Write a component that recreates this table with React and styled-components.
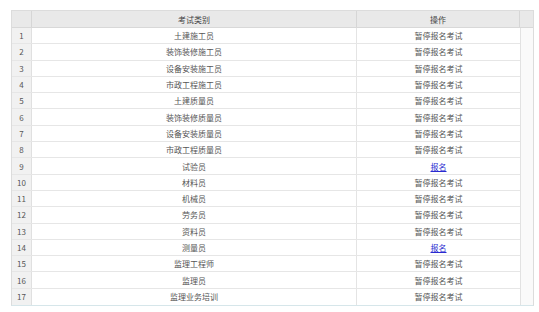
import styled, { createGlobalStyle } from "styled-components";

const GlobalStyle = createGlobalStyle`
  body {
    margin: 0;
    background: #ffffff;
    font-family: "Noto Sans CJK SC", "Noto Sans", sans-serif;
  }
`;

// exam list, link = registration open
const exams = [
  { name: "土建施工员" },
  { name: "装饰装修施工员" },
  { name: "设备安装施工员" },
  { name: "市政工程施工员" },
  { name: "土建质量员" },
  { name: "装饰装修质量员" },
  { name: "设备安装质量员" },
  { name: "市政工程质量员" },
  { name: "试验员", link: true },
  { name: "材料员" },
  { name: "机械员" },
  { name: "劳务员" },
  { name: "资料员" },
  { name: "测量员", link: true },
  { name: "监理工程师" },
  { name: "监理员" },
  { name: "监理业务培训" },
];

const App = () => {
  return (
    <>
      <GlobalStyle />
      <Grid>
        <HeadRow>
          <HeadCell $first />
          <HeadCell>考试类别</HeadCell>
          <HeadCell>操作</HeadCell>
          <HeadCell $last />
        </HeadRow>
        <Body>
          <Rows>
            {exams.map((el, index) => (
              <Row key={el.name} $last={index === exams.length - 1}>
                <NumCell>{index + 1}</NumCell>
                <Cell>{el.name}</Cell>
                <Cell $last>
                  {el.link ? <Link href="#">报名</Link> : "暂停报名考试"}
                </Cell>
              </Row>
            ))}
          </Rows>
          <Gutter />
        </Body>
      </Grid>
    </>
  );
};

export default App;

// styling starts from here

const Grid = styled.div`
  box-sizing: border-box;
  margin: 10px 0 0 11px;
  width: 523px;
  border: 1px solid #dcdcdc;
  border-bottom-color: #d6e6ea;
  font-size: 8px;
  color: #555;
`;

const HeadRow = styled.div`
  display: grid;
  grid-template-columns: 20px 325px 163px 1fr;
  height: 16px;
  background: #e9e9e9;
  border-bottom: 1px solid #d8d8d8;
`;

const HeadCell = styled.div`
  display: flex;
  align-items: center;
  justify-content: center;
  border-right: ${(p) => (p.$last ? "none" : "1px solid #d6d6d6")};
  color: #444;
`;

const Body = styled.div`
  display: flex;
`;

const Rows = styled.div`
  width: 508px;
  border-right: 1px solid #e2e2e2;
`;

const Row = styled.div`
  display: grid;
  grid-template-columns: 20px 325px 1fr;
  height: 16.3px;
  box-sizing: border-box;
  border-bottom: ${(p) => (p.$last ? "none" : "1px solid #e6e6e6")};
`;

const NumCell = styled.div`
  display: flex;
  align-items: center;
  justify-content: center;
  background: #f1f1f1;
  border-right: 1px solid #e0e0e0;
  color: #555;
`;

const Cell = styled.div`
  display: flex;
  align-items: center;
  justify-content: center;
  border-right: ${(p) => (p.$last ? "none" : "1px solid #e4e4e4")};
`;

const Link = styled.a`
  color: #2a2ad0;
  text-decoration: underline;
`;

const Gutter = styled.div`
  flex: 1;
  background: #fafafa;
`;
